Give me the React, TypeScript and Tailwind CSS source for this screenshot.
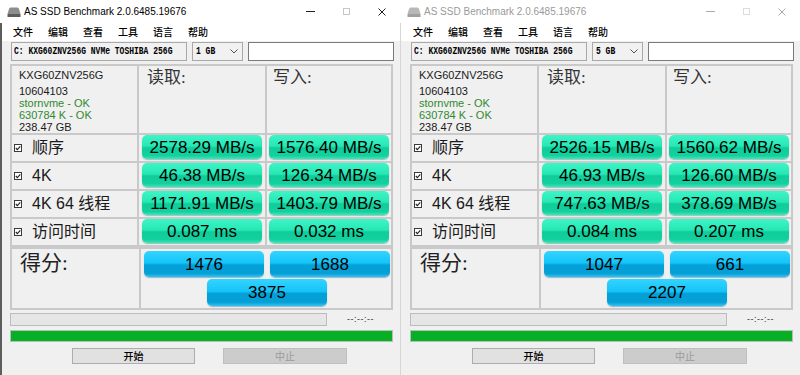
import React from "react";

type WinData = {
  active: boolean;
  size: string;
  values: [string, string][];
  scores: [string, string, string];
};

const LEFT: WinData = {
  active: true,
  size: "1 GB",
  values: [
    ["2578.29 MB/s", "1576.40 MB/s"],
    ["46.38 MB/s", "126.34 MB/s"],
    ["1171.91 MB/s", "1403.79 MB/s"],
    ["0.087 ms", "0.032 ms"],
  ],
  scores: ["1476", "1688", "3875"],
};

const RIGHT: WinData = {
  active: false,
  size: "5 GB",
  values: [
    ["2526.15 MB/s", "1560.62 MB/s"],
    ["46.93 MB/s", "126.60 MB/s"],
    ["747.63 MB/s", "378.69 MB/s"],
    ["0.084 ms", "0.207 ms"],
  ],
  scores: ["1047", "661", "2207"],
};

const LABELS = ["顺序", "4K", "4K 64 线程", "访问时间"];
const MENU = ["文件", "编辑", "查看", "工具", "语言", "帮助"];

function DriveIcon({ active }: { active: boolean }) {
  return (
    <svg width="14" height="10" viewBox="0 0 14 10">
      <path d="M3.5 0.5 H10.5 Q11.5 0.5 12 2 L13.5 7 H0.5 L2 2 Q2.5 0.5 3.5 0.5 Z" fill={active ? "#8d8d8d" : "#b8b8b8"} />
      <rect x="0.5" y="7" width="13" height="3" fill={active ? "#5c5c5c" : "#a0a0a0"} />
    </svg>
  );
}

function Check() {
  return (
    <svg width="8" height="8" viewBox="0 0 8 8" className="shrink-0">
      <rect x="0.5" y="0.5" width="7" height="7" fill="#fff" stroke="#3a3a3a" />
      <path d="M1.8 4 L3.3 5.6 L6.3 2.3" fill="none" stroke="#222" strokeWidth="1.1" />
    </svg>
  );
}

function GreenVal({ v }: { v: string }) {
  return (
    <div className="h-[24px] w-[120px] rounded-[5px] bg-[linear-gradient(to_bottom,#3ef4c6_0%,#26e8b5_46%,#10cc9a_54%,#13d19f_86%,#3be6b9_100%)] shadow-[0_1px_1px_rgba(0,110,80,0.35)] flex items-center justify-center text-[17px] leading-none text-black font-['Liberation_Sans',sans-serif]">
      {v}
    </div>
  );
}

function BlueVal({ v, h }: { v: string; h: string }) {
  return (
    <div className={`${h} w-[120px] rounded-[5px] bg-[linear-gradient(to_bottom,#34d4ff_0%,#14c4f8_46%,#03a0d9_54%,#069fd6_86%,#2fc4f2_100%)] shadow-[0_1px_1px_rgba(0,70,120,0.35)] flex items-center justify-center text-[17px] leading-none text-black font-['Liberation_Sans',sans-serif]`}>
      {v}
    </div>
  );
}

function Window({ d }: { d: WinData }) {
  const a = d.active;
  return (
    <div className="w-[400px] h-[375px] shrink-0 bg-[#f0f0f0] flex flex-col overflow-hidden font-['Liberation_Sans','Noto_Sans_CJK_SC',sans-serif]">
      {/* Title bar */}
      <div className="h-[23px] bg-white flex items-center shrink-0">
        <div className="pl-[7px] pr-[3px] flex items-center">
          <DriveIcon active={a} />
        </div>
        <span className={`text-[10px] leading-none ${a ? "text-black" : "text-[#9a9a9a]"}`}>
          AS SSD Benchmark 2.0.6485.19676
        </span>
        <div className="ml-auto flex h-full">
          <div className="w-[36px] h-full flex items-center justify-center">
            <div className={`w-[9px] h-px ${a ? "bg-[#222]" : "bg-[#aaa]"}`} />
          </div>
          <div className="w-[36px] h-full flex items-center justify-center">
            <div className={`w-[7px] h-[7px] border ${a ? "border-[#c6c6c6]" : "border-[#dcdcdc]"}`} />
          </div>
          <div className="w-[36px] h-full flex items-center justify-center">
            <svg width="8" height="8" viewBox="0 0 8 8">
              <path d="M0.5 0.5 L7.5 7.5 M7.5 0.5 L0.5 7.5" stroke={a ? "#222" : "#aaa"} strokeWidth="1" />
            </svg>
          </div>
        </div>
      </div>

      {/* Body with left border */}
      <div className={`flex-1 flex flex-col ${a ? "border-l-2 border-[#5d5d5d]" : "border-l border-[#d6d6d6]"}`}>
        {/* Menu */}
        <div className={`h-[18px] bg-white flex items-center gap-[15px] ${a ? "pl-[11px]" : "pl-[12px]"}`}>
          {MENU.map((m) => (
            <span key={m} className="text-[10px] leading-none text-black font-['Noto_Sans_CJK_SC',sans-serif] font-medium">
              {m}
            </span>
          ))}
        </div>

        <div className={`flex flex-col ${a ? "pl-[8px]" : "pl-[9px]"}`}>
          {/* Combo row */}
          <div className="mt-px h-[19px] flex gap-[5px]">
            <div className="ml-px w-[176px] h-full border border-[#a9a9a9] bg-[#f1f1f1] flex items-center pl-[2px] pr-[4px]">
              <span className="text-[10px] leading-none text-black font-['Liberation_Mono',monospace] font-bold inline-block scale-x-[0.8] origin-left whitespace-nowrap">
                C: KXG60ZNV256G NVMe TOSHIBA 256G
              </span>
              <svg width="8" height="5" viewBox="0 0 8 5" className="ml-auto shrink-0">
                <path d="M0.5 0.5 L4 4 L7.5 0.5" fill="none" stroke="#555" />
              </svg>
            </div>
            <div className="w-[51px] h-full border border-[#a9a9a9] bg-[#f1f1f1] flex items-center pl-[3px] pr-[4px]">
              <span className="text-[10px] leading-none text-black font-['Liberation_Mono',monospace] font-bold inline-block scale-x-[0.8] origin-left whitespace-nowrap">
                {d.size}
              </span>
              <svg width="8" height="5" viewBox="0 0 8 5" className="ml-auto shrink-0">
                <path d="M0.5 0.5 L4 4 L7.5 0.5" fill="none" stroke="#555" />
              </svg>
            </div>
            <div className="w-[146px] h-full border border-[#7a7a7a] bg-white" />
          </div>

          {/* Bench table */}
          <div className="mt-[3px] w-[383px] bg-[#c9c9c9] p-[2px] grid grid-cols-[125px_126px_124px] gap-[2px]">
            <div className="h-[67px] bg-[#f0f0f0] pl-[7px] pt-[3px] text-[11px] leading-[12px] text-[#1a1a1a] font-['Liberation_Sans',sans-serif]">
              <div>KXG60ZNV256G</div>
              <div className="mt-[4px]">10604103</div>
              <div className="text-[#2f8a2f]">stornvme - OK</div>
              <div className="text-[#2f8a2f]">630784 K - OK</div>
              <div>238.47 GB</div>
            </div>
            <div className="h-[67px] bg-[#f0f0f0] pl-[8px] pt-[1px] text-[17px] leading-[22px] text-[#333] font-['Liberation_Serif','Noto_Sans_CJK_SC',serif]">
              读取:
            </div>
            <div className="h-[67px] bg-[#f0f0f0] pl-[6px] pt-[1px] text-[17px] leading-[22px] text-[#333] font-['Liberation_Serif','Noto_Sans_CJK_SC',serif]">
              写入:
            </div>
            {LABELS.map((l, i) => (
              <React.Fragment key={l}>
                <div className="h-[26px] bg-[#f0f0f0] flex items-center pl-[2px] gap-[10px]">
                  <Check />
                  <span className="text-[16px] leading-none text-[#1a1a1a] whitespace-nowrap">{l}</span>
                </div>
                <div className="h-[26px] bg-[#f0f0f0] pl-[3px]">
                  <GreenVal v={d.values[i][0]} />
                </div>
                <div className="h-[26px] bg-[#f0f0f0] pl-[2px]">
                  <GreenVal v={d.values[i][1]} />
                </div>
              </React.Fragment>
            ))}
          </div>

          {/* Score table */}
          <div className="w-[383px] bg-[#c9c9c9] p-[2px] grid grid-cols-[127px_250px] gap-[2px]">
            <div className="h-[59px] bg-[#f0f0f0] pl-[8px] pt-[1px] text-[21px] leading-[26px] text-[#222] font-['Liberation_Serif','Noto_Sans_CJK_SC',serif]">
              得分:
            </div>
            <div className="h-[59px] bg-[#f0f0f0] flex flex-col pt-[2px] gap-[2px]">
              <div className="flex pl-[3px] gap-[6px]">
                <BlueVal v={d.scores[0]} h="h-[26px]" />
                <BlueVal v={d.scores[1]} h="h-[26px]" />
              </div>
              <div className="flex justify-center pl-[2px]">
                <BlueVal v={d.scores[2]} h="h-[27px]" />
              </div>
            </div>
          </div>

          {/* Progress */}
          <div className="mt-[3px] flex items-center">
            <div className="w-[317px] h-[13px] bg-[#e6e6e6] border border-[#bcbcbc]" />
            <span className="ml-[20px] text-[9px] leading-none text-[#333] tracking-[0.5px]">--:--:--</span>
          </div>
          <div className="mt-[4px] w-[383px] h-[12px] bg-[#06b025] border border-[#bcbcbc]" />

          {/* Buttons */}
          <div className="mt-[6px] flex pl-[62px] gap-[28px]">
            <div className="w-[123px] h-[16px] bg-[#e1e1e1] border border-[#adadad] flex items-center justify-center text-[10px] leading-none text-black font-['Noto_Sans_CJK_SC',sans-serif] font-medium">
              开始
            </div>
            <div className="w-[124px] h-[16px] bg-[#cccccc] border border-[#bfbfbf] flex items-center justify-center text-[10px] leading-none text-[#a3a3a3] font-['Noto_Sans_CJK_SC',sans-serif] font-medium">
              中止
            </div>
          </div>
        </div>
      </div>
    </div>
  );
}

export default function App() {
  return (
    <div className="w-[800px] h-[375px] flex overflow-hidden bg-[#f0f0f0]">
      <Window d={LEFT} />
      <Window d={RIGHT} />
    </div>
  );
}
